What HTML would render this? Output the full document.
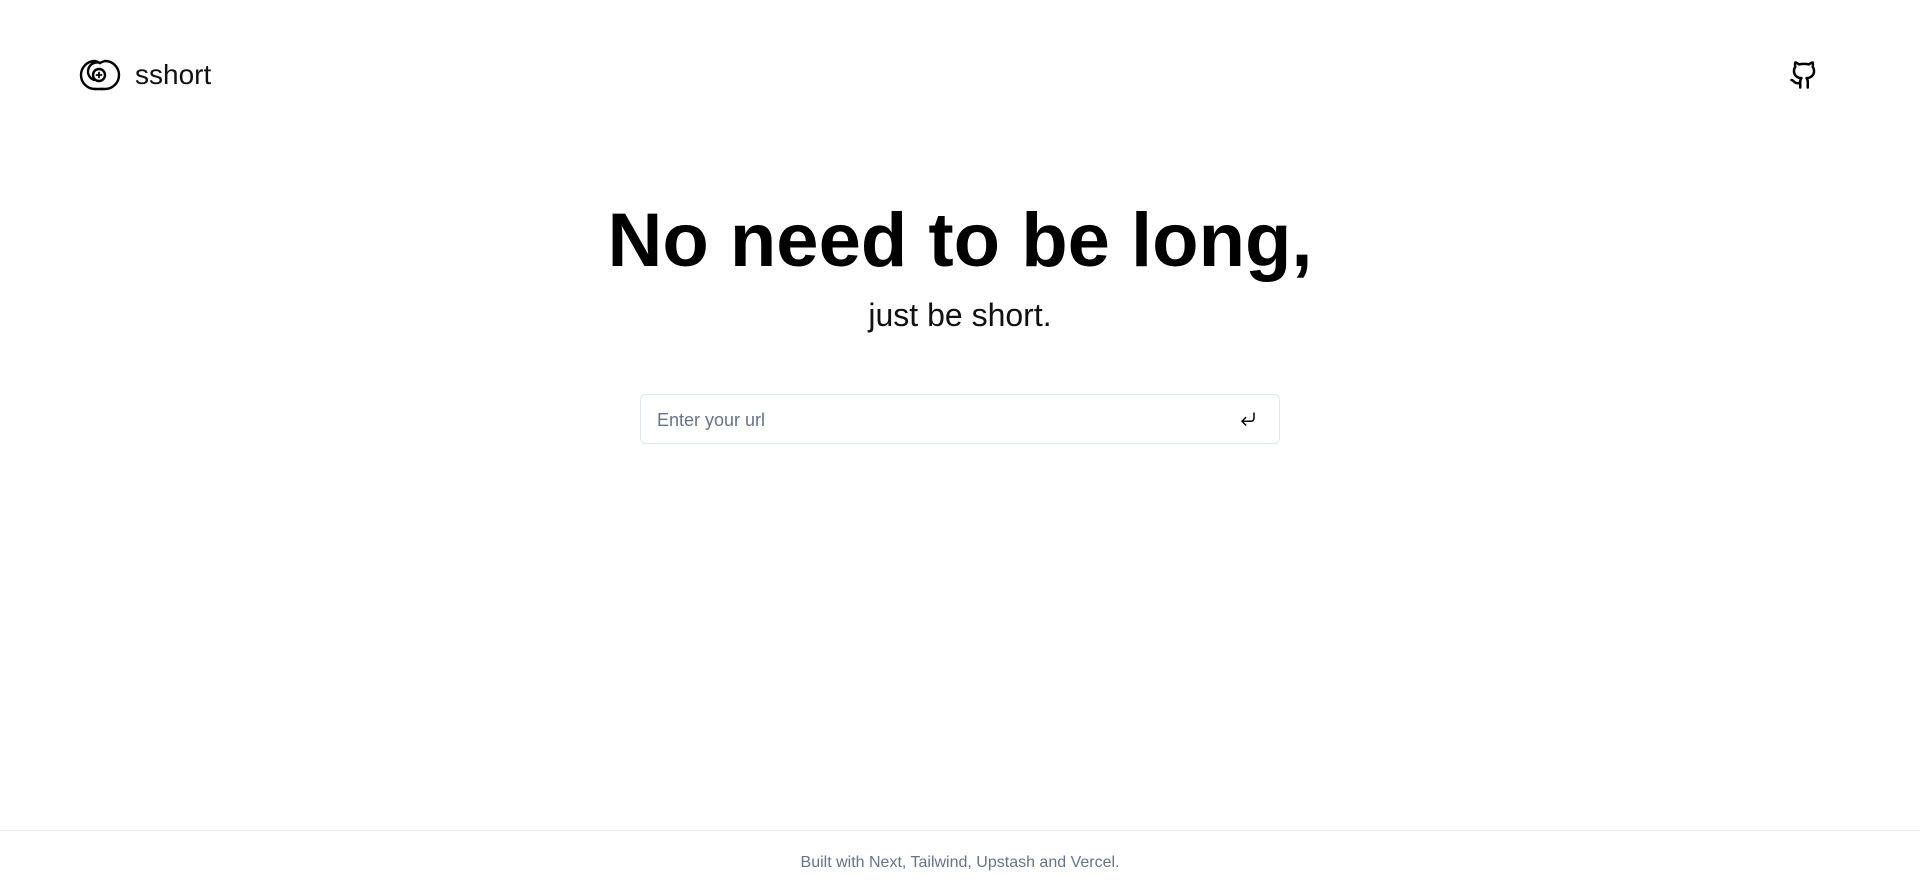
<!DOCTYPE html>
<html><head><meta charset="utf-8"><style>
*{margin:0;padding:0;box-sizing:border-box}
html,body{width:1920px;height:892px;background:#fff;font-family:"Liberation Sans",sans-serif;color:#000;overflow:hidden;position:relative}
.logo{position:absolute;left:79px;top:58px;width:42px;height:34px}
.brand{position:absolute;left:135px;top:59px;font-size:28px;line-height:32px;color:#111}
.gh{position:absolute;left:1789px;top:60px}
h1{position:absolute;left:0;width:1920px;top:193px;text-align:center;font-size:76px;line-height:96px;font-weight:bold;letter-spacing:0px}
.sub{position:absolute;left:0;width:1920px;top:295px;text-align:center;font-size:32px;line-height:40px;color:#111}
.box{position:absolute;left:640px;top:394px;width:640px;height:50px;border:1px solid #e2e8f0;border-radius:6px}
.ph{position:absolute;left:16px;top:14px;font-size:18px;line-height:22px;color:#64748b}
.ret{position:absolute;right:22px;top:15px}
.line{position:absolute;left:0;top:830px;width:1920px;height:1px;background:#e5e7eb}
.foot{position:absolute;left:0;width:1920px;top:853px;text-align:center;font-size:16px;line-height:20px;color:#64748b}
</style></head><body>
<svg class="logo" viewBox="0 0 42 34" fill="none" stroke="#000" stroke-width="2.4" stroke-linecap="round">
<path d="M16 3 A14 14 0 0 0 16 31"/>
<path d="M16 3 A14 14 0 0 1 21 5"/>
<path d="M26 3 A14 14 0 0 1 26 31 L22 31"/>
<path d="M16 31 L24 31"/>
<path d="M21 5 A9 9 0 0 0 15 22"/>
<circle cx="20" cy="17" r="6"/>
<path d="M20 14.5v5M17.5 17h5" stroke-width="1.8"/>
<path d="M26 3 A14 14 0 0 0 21 5"/>
</svg>
<div class="brand">sshort</div>
<svg class="gh" width="30" height="30" viewBox="0 0 24 24" fill="none" stroke="#000" stroke-width="2" stroke-linecap="round" stroke-linejoin="round"><path d="M15 22v-4a4.8 4.8 0 0 0-1-3.5c3 0 6-2 6-5.5.08-1.25-.27-2.48-1-3.5.28-1.15.28-2.35 0-3.5 0 0-1 0-3 1.5-2.64-.5-5.36-.5-8 0C6 2 5 2 5 2c-.3 1.15-.3 2.35 0 3.5A5.403 5.403 0 0 0 4 9c0 3.5 3 5.5 6 5.5-.39.49-.68 1.05-.85 1.65-.17.6-.22 1.23-.15 1.85v4"/><path d="M9 18c-4.51 2-5-2-7-2"/></svg>
<h1>No need to be long,</h1>
<div class="sub">just be short.</div>
<div class="box"><div class="ph">Enter your url</div>
<svg class="ret" width="18" height="18" viewBox="0 0 24 24" fill="none" stroke="#000" stroke-width="2" stroke-linecap="round" stroke-linejoin="round"><path d="M9 10l-5 5 5 5"/><path d="M20 4v7a4 4 0 0 1-4 4H4"/></svg>
</div>
<div class="line"></div>
<div class="foot">Built with Next, Tailwind, Upstash and Vercel.</div>
</body></html>
